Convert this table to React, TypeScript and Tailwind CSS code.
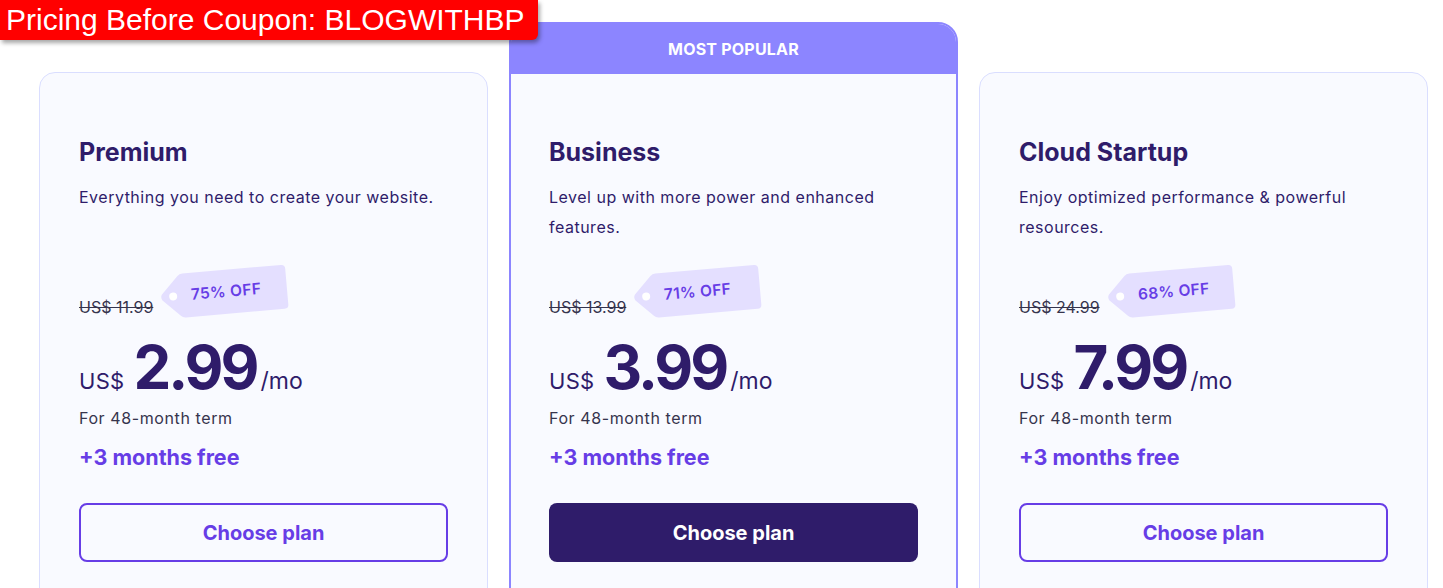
import React from "react";

type Plan = {
  name: string;
  desc: string;
  old: string;
  off: string;
  price: string;
  popular?: boolean;
};

const plans: Plan[] = [
  { name: "Premium", desc: "Everything you need to create your website.", old: "US$ 11.99", off: "75% OFF", price: "2.99" },
  { name: "Business", desc: "Level up with more power and enhanced features.", old: "US$ 13.99", off: "71% OFF", price: "3.99", popular: true },
  { name: "Cloud Startup", desc: "Enjoy optimized performance & powerful resources.", old: "US$ 24.99", off: "68% OFF", price: "7.99" },
];

function Tag({ text }: { text: string }) {
  return (
    <div className="relative w-[130px] h-[48px] -rotate-[5deg] translate-y-[-6px]">
      <svg className="absolute inset-0" width="130" height="48" viewBox="0 0 130 48">
        <path
          d="M25 2 H124 Q128 2 128 6 V42 Q128 46 124 46 H25 Q22 46 20 44 L3 27 Q1 24 3 21 L20 4 Q22 2 25 2 Z"
          fill="#e4dfff"
        />
        <circle cx="14" cy="24" r="4" fill="#ffffff" />
      </svg>
      <span className="absolute left-[32px] top-0 h-full flex items-center text-[15.5px] font-semibold text-[#673de6] tracking-[0.3px]">
        {text}
      </span>
    </div>
  );
}

function Card({ plan }: { plan: Plan }) {
  const pop = !!plan.popular;
  return (
    <div
      className={
        pop
          ? "w-[449px] h-[600px] shrink-0 rounded-[20px] border-2 border-[#8c85ff] bg-[#f9faff] overflow-hidden flex flex-col"
          : "w-[449px] h-[560px] shrink-0 mt-[50px] rounded-[16px] border border-[#dadeff] bg-[#f9faff] flex flex-col"
      }
    >
      {pop && (
        <div className="h-[50px] bg-[#8c85ff] flex items-center justify-center text-white text-[16px] font-bold tracking-[0.2px]">
          MOST POPULAR
        </div>
      )}
      <div className={pop ? "pt-[62px] px-[38px]" : "pt-[63px] px-[39px]"}>
        <h2 className="text-[25px] leading-[32px] font-bold text-[#2f1c6a]">{plan.name}</h2>
        <p className="mt-[14px] h-[60px] text-[16px] leading-[30px] tracking-[0.5px] text-[#2f1c6a]">{plan.desc}</p>
        <div className="mt-[20px] h-[60px] flex items-end gap-[6px]">
          <span className="text-[16px] leading-[24px] text-[#36344d] line-through mb-[3px]">{plan.old}</span>
          <Tag text={plan.off} />
        </div>
        <div className="mt-[14px] h-[62px] flex items-end text-[#2f1c6a]">
          <span className="text-[22px] leading-[30px] mr-[9px] mb-[2px] tracking-[0.3px]">US$</span>
          <span className="text-[60px] leading-[62px] font-bold tracking-[-3px]">{plan.price}</span>
          <span className="text-[23px] leading-[30px] ml-[4px] mb-[2px]">/mo</span>
        </div>
        <p className="mt-[8px] text-[16px] leading-[24px] tracking-[0.6px] text-[#36344d]">For 48-month term</p>
        <p className="mt-[13px] text-[21.5px] leading-[28px] font-bold text-[#673de6]">+3 months free</p>
        <button
          className={
            pop
              ? "mt-[32px] w-full h-[59px] rounded-[8px] bg-[#2f1c6a] text-white text-[20px] font-bold"
              : "mt-[32px] w-full h-[59px] rounded-[8px] border-2 border-[#673de6] text-[#673de6] text-[20px] font-bold"
          }
        >
          Choose plan
        </button>
      </div>
    </div>
  );
}

export default function App() {
  return (
    <div
      className="relative w-[1443px] h-[588px] bg-white overflow-hidden"
      style={{ fontFamily: "Inter, 'Noto Sans', sans-serif" }}
    >
      <div className="flex gap-[21px] pl-[39px] pt-[22px]">
        {plans.map((p) => (
          <Card key={p.name} plan={p} />
        ))}
      </div>
      <div
        className="absolute left-0 top-0 w-[538px] h-[40px] bg-[#ff0000] rounded-br-[6px] shadow-[2px_3px_4px_rgba(0,0,0,0.35)] flex items-center pl-[6px] text-white text-[30px] leading-none"
        style={{ fontFamily: "'Liberation Sans', Arial, sans-serif" }}
      >
        Pricing Before Coupon: BLOGWITHBP
      </div>
    </div>
  );
}
